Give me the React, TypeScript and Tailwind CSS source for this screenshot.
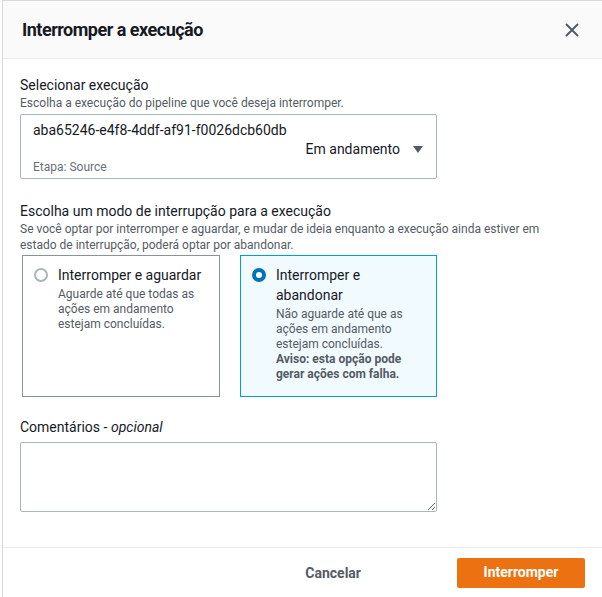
import React, { useState } from 'react';

type Mode = 'wait' | 'abandon';

const font = { fontFamily: 'Roboto, "Noto Sans", sans-serif' };

const Radio: React.FC<{ checked: boolean }> = ({ checked }) =>
  checked ? (
    <span className="mt-[3px] flex h-[14px] w-[14px] shrink-0 items-center justify-center rounded-full bg-[#0073bb]">
      <span className="h-[6px] w-[6px] rounded-full bg-white" />
    </span>
  ) : (
    <span className="mt-[3px] h-[14px] w-[14px] shrink-0 rounded-full border-2 border-[#aab7b8] bg-white" />
  );

export default function App() {
  const [mode, setMode] = useState<Mode>('abandon');

  const card = (m: Mode) =>
    mode === m ? 'border-[#00a1c9] bg-[#f1faff]' : 'border-[#879596] bg-white';

  return (
    <div className="h-[597px] w-[602px] overflow-hidden bg-white text-[#16191f]" style={font}>
      <div className="ml-[2px] flex h-full flex-col border-l border-t border-[#d5dbdb]">
        <div className="flex h-[58px] items-center justify-between border-b border-[#eaeded] bg-[#fafafa] pl-[19px] pr-[22px]">
          <h2 className="text-[18px] font-bold leading-[22px] tracking-[-0.5px]">Interromper a execução</h2>
          <button className="text-[#545b64]" aria-label="Fechar">
            <svg width="16" height="16" viewBox="0 0 16 16" fill="none" stroke="currentColor" strokeWidth="2">
              <path d="M2 2l12 12M14 2L2 14" />
            </svg>
          </button>
        </div>

        <div className="flex-1 px-[17px] pt-[16px]">
          <div className="text-[14px] leading-[20px]">Selecionar execução</div>
          <div className="text-[12px] leading-[16px] text-[#545b64]">
            Escolha a execução do pipeline que você deseja interromper.
          </div>
          <div className="mt-[3px] w-[417px] rounded-[2px] border border-[#aab7b8] px-[12px] pb-[3px] pt-[5px]">
            <div className="text-[14px] leading-[20px]">aba65246-e4f8-4ddf-af91-f0026dcb60db</div>
            <div className="flex items-center justify-end text-[14px] leading-[19px]">
              <span>Em andamento</span>
              <svg className="ml-[13px] mr-[1px]" width="10" height="7" viewBox="0 0 10 7">
                <path d="M0 0h10L5 7z" fill="#545b64" />
              </svg>
            </div>
            <div className="text-[12px] leading-[16px] text-[#687078]">Etapa: Source</div>
          </div>

          <div className="mt-[22px] text-[14px] leading-[20px]">Escolha um modo de interrupção para a execução</div>
          <div className="text-[12px] leading-[16px] text-[#545b64]">
            Se você optar por interromper e aguardar, e mudar de ideia enquanto a execução ainda estiver em
            <br />
            estado de interrupção, poderá optar por abandonar.
          </div>

          <div className="mt-[2px] flex gap-[20px] pl-[2px]">
            <label
              onClick={() => setMode('wait')}
              className={`flex h-[142px] w-[198px] cursor-pointer gap-[10px] border px-[11px] pt-[9px] ${card('wait')}`}
            >
              <Radio checked={mode === 'wait'} />
              <div>
                <div className="text-[14px] leading-[20px]">Interromper e aguardar</div>
                <div className="mt-[2px] text-[12px] leading-[15px] text-[#545b64]">
                  Aguarde até que todas as ações em andamento estejam concluídas.
                </div>
              </div>
            </label>
            <label
              onClick={() => setMode('abandon')}
              className={`flex h-[142px] w-[197px] cursor-pointer gap-[10px] border px-[11px] pt-[9px] ${card('abandon')}`}
            >
              <Radio checked={mode === 'abandon'} />
              <div>
                <div className="text-[14px] leading-[20px]">Interromper e abandonar</div>
                <div className="mt-[2px] text-[12px] leading-[15px] text-[#545b64]">
                  <div>Não aguarde até que as ações em andamento estejam concluídas.</div>
                  <div className="font-bold">Aviso: esta opção pode gerar ações com falha.</div>
                </div>
              </div>
            </label>
          </div>

          <div className="mt-[20px] text-[14px] leading-[20px]">
            Comentários - <i>opcional</i>
          </div>
          <textarea className="mt-[5px] block h-[70px] w-[417px] rounded-[2px] border border-[#aab7b8] px-[12px] py-[4px] text-[14px] outline-none" />
        </div>

        <div className="flex h-[50px] items-center justify-end border-t border-[#eaeded] pr-[17px]">
          <button className="mr-[96px] text-[14px] font-bold leading-[30px] text-[#545b64]">Cancelar</button>
          <button className="h-[30px] w-[128px] rounded-[2px] bg-[#ec7211] text-[14px] font-bold text-white">
            Interromper
          </button>
        </div>
      </div>
    </div>
  );
}
